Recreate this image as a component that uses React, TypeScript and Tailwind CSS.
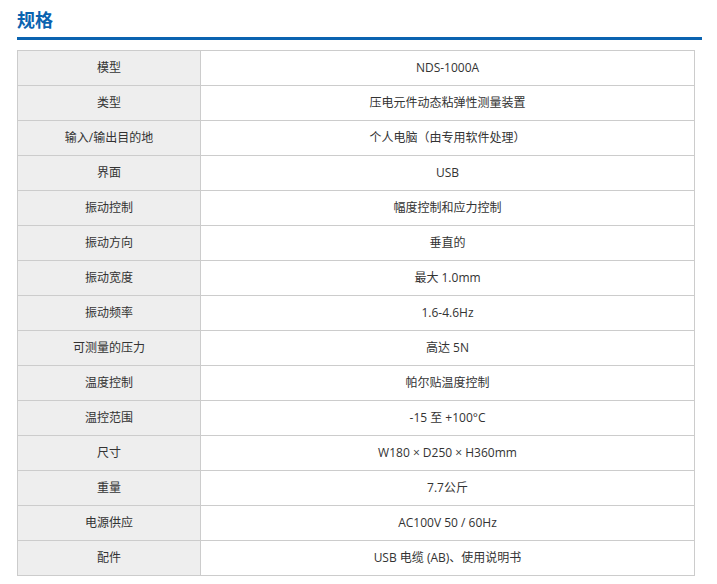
const rows: [string, string][] = [
  ["模型", "NDS-1000A"],
  ["类型", "压电元件动态粘弹性测量装置"],
  ["输入/输出目的地", "个人电脑（由专用软件处理）"],
  ["界面", "USB"],
  ["振动控制", "幅度控制和应力控制"],
  ["振动方向", "垂直的"],
  ["振动宽度", "最大 1.0mm"],
  ["振动频率", "1.6-4.6Hz"],
  ["可测量的压力", "高达 5N"],
  ["温度控制", "帕尔贴温度控制"],
  ["温控范围", "-15 至 +100°C"],
  ["尺寸", "W180 × D250 × H360mm"],
  ["重量", "7.7公斤"],
  ["电源供应", "AC100V 50 / 60Hz"],
  ["配件", "USB 电缆 (AB)、使用说明书"],
];

export default function App() {
  return (
    <div className="bg-white pl-[17px] pr-[15px] pt-[8px]" style={{ fontFamily: '"Open Sans","Noto Sans CJK SC",sans-serif' }}>
      <h2 className="text-[18px] font-bold text-[#0a63b0] leading-[24px]">规格</h2>
      <div className="mt-[5px] h-[3px] bg-[#0a63b0]" />
      <table className="mt-[10px] w-[678px] border-collapse text-[12px] text-[#333]">
        <tbody>
          {rows.map(([k, v]) => (
            <tr key={k} className="h-[35px]">
              <td className="w-[183px] border border-[#cccccc] bg-[#eeeeee] text-center">{k}</td>
              <td className="border border-[#cccccc] text-center">{v}</td>
            </tr>
          ))}
        </tbody>
      </table>
    </div>
  );
}
